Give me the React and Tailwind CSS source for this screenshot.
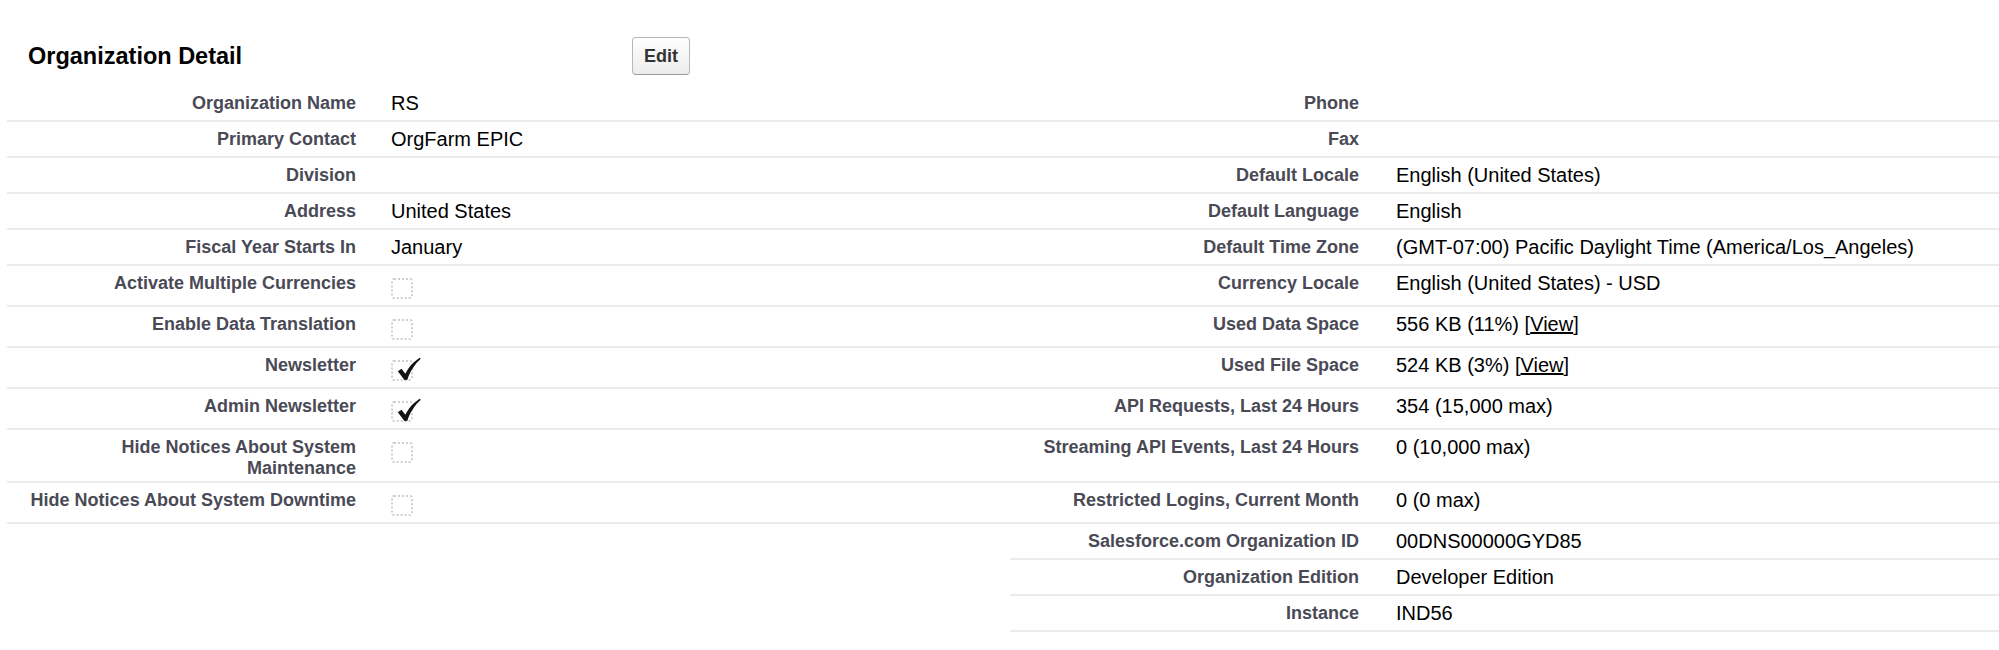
const rows = [
  { l: "Organization Name", v: "RS", rl: "Phone", rv: "" },
  { l: "Primary Contact", v: "OrgFarm EPIC", rl: "Fax", rv: "" },
  { l: "Division", v: "", rl: "Default Locale", rv: "English (United States)" },
  { l: "Address", v: "United States", rl: "Default Language", rv: "English" },
  { l: "Fiscal Year Starts In", v: "January", rl: "Default Time Zone", rv: "(GMT-07:00) Pacific Daylight Time (America/Los_Angeles)" },
  { l: "Activate Multiple Currencies", box: false, rl: "Currency Locale", rv: "English (United States) - USD" },
  { l: "Enable Data Translation", box: false, rl: "Used Data Space", rv: "556 KB (11%)", view: true },
  { l: "Newsletter", box: true, rl: "Used File Space", rv: "524 KB (3%)", view: true },
  { l: "Admin Newsletter", box: true, rl: "API Requests, Last 24 Hours", rv: "354 (15,000 max)" },
  { l: "Hide Notices About System Maintenance", box: false, rl: "Streaming API Events, Last 24 Hours", rv: "0 (10,000 max)" },
  { l: "Hide Notices About System Downtime", box: false, rl: "Restricted Logins, Current Month", rv: "0 (0 max)" },
  { l: null, rl: "Salesforce.com Organization ID", rv: "00DNS00000GYD85" },
  { l: null, rl: "Organization Edition", rv: "Developer Edition" },
  { l: null, rl: "Instance", rv: "IND56" },
]

function Checkbox({ checked }) {
  return (
    <div className="relative mt-[7px] mb-[1px] w-[22px] h-[21px] border-2 border-dotted border-[#d0d0d0] rounded-[3px]">
      {checked && (
        <svg className="absolute left-[2px] top-[-6px]" width="27" height="27" viewBox="0 0 24 24">
          <path d="M2.5 13.5 L5.8 11.3 L9.2 15.8 C12 10 16 5.5 22 1.5 L22.9 2.5 C17.5 7.5 13.8 13 11 21 L8.4 21.3 Z" fill="#111" />
        </svg>
      )}
    </div>
  )
}

export default function App() {
  const line = "border-b-2 border-[#ececec]"
  return (
    <div className="w-[1999px] h-[650px] bg-white text-black font-['Liberation_Sans',Arial,sans-serif] overflow-hidden">

      {/* Header */}
      <div className="flex items-center pl-[28px] pt-[37px]">
        <h2 className="w-[604px] text-[23.5px] font-bold leading-[28px]">Organization Detail</h2>
        <button className="w-[58px] h-[38px] rounded-[4px] border border-[#b8b8b8] border-b-[#9a9a9a] bg-gradient-to-b from-white to-[#ededed] text-[#333] text-[18px] font-bold">
          Edit
        </button>
      </div>

      {/* Detail list */}
      <div className="mt-[11px] ml-[7px] grid grid-cols-[366px_637px_366px_1fr]">
        {rows.map((r, i) => (
          <div key={i} className="contents">
            <div className={`text-right pl-[14px] pr-[17px] pt-[7px] pb-[2px] text-[18px] leading-[21px] font-bold text-[#4a4a56] ${r.l ? line : ""}`}>
              {r.l}
            </div>
            <div className={`pl-[18px] py-[5px] text-[20px] leading-[24px] ${r.l ? line : ""}`}>
              {r.box !== undefined ? <Checkbox checked={r.box} /> : r.v}
            </div>
            <div className={`text-right pr-[17px] pt-[7px] pb-[2px] text-[18px] leading-[21px] font-bold text-[#4a4a56] ${line}`}>
              {r.rl}
            </div>
            <div className={`pl-[20px] py-[5px] text-[20px] leading-[24px] ${line}`}>
              {r.rv}
              {r.view && (
                <> [<a className="underline">View</a>]</>
              )}
            </div>
          </div>
        ))}
      </div>
    </div>
  )
}
